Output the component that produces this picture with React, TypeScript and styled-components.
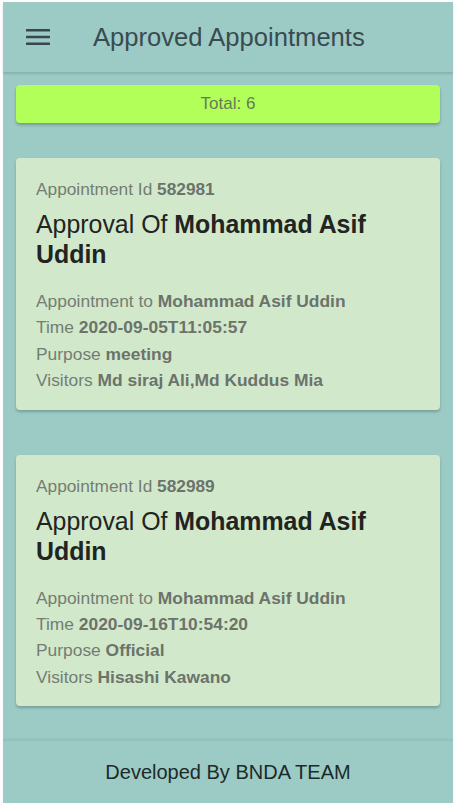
import styled, { createGlobalStyle } from "styled-components";

interface Appointment {
  id: number;
  approvalOf: string;
  to: string;
  time: string;
  purpose: string;
  visitors: string;
}

const appointments: Appointment[] = [
  {
    id: 582981,
    approvalOf: "Mohammad Asif Uddin",
    to: "Mohammad Asif Uddin",
    time: "2020-09-05T11:05:57",
    purpose: "meeting",
    visitors: "Md siraj Ali,Md Kuddus Mia",
  },
  {
    id: 582989,
    approvalOf: "Mohammad Asif Uddin",
    to: "Mohammad Asif Uddin",
    time: "2020-09-16T10:54:20",
    purpose: "Official",
    visitors: "Hisashi Kawano",
  },
];

const GlobalStyle = createGlobalStyle`
  * {
    box-sizing: border-box;
  }
  body {
    margin: 0;
    background: #fdfdfd;
    font-family: "Liberation Sans", Arial, sans-serif;
  }
`;

const Frame = styled.div`
  padding: 2px 1px 3px 3px;
`;

const Screen = styled.div`
  display: flex;
  flex-direction: column;
  min-height: 800px;
  background: #9ccac5;
`;

const Header = styled.header`
  display: flex;
  align-items: center;
  gap: 43px;
  height: 70px;
  padding-left: 23px;
  background: #9ccac5;
  box-shadow: 0 2px 2px rgba(0, 0, 0, 0.12);
  position: relative;
  z-index: 1;
`;

const MenuButton = styled.div`
  display: flex;
  align-items: center;
  width: 24px;
  height: 24px;
`;

const Title = styled.h1`
  margin: 0;
  font-size: 25.6px;
  font-weight: 400;
  color: #3a4b50;
`;

const Content = styled.main`
  flex: 1;
  display: flex;
  flex-direction: column;
  padding: 13px 13px 34px;
`;

const TotalBar = styled.div`
  display: flex;
  align-items: center;
  justify-content: center;
  height: 38px;
  margin-bottom: 35px;
  border-radius: 4px;
  background: #b2ff59;
  color: #667a5a;
  font-size: 17px;
  box-shadow: 0 2px 3px rgba(0, 0, 0, 0.25);
`;

const CardList = styled.div`
  display: flex;
  flex-direction: column;
  gap: 45px;
`;

const Card = styled.article`
  padding: 21px 20px 16px;
  border-radius: 4px;
  background: #d2e8cb;
  box-shadow: 0 2px 3px rgba(0, 0, 0, 0.22);
`;

const IdLine = styled.div`
  font-size: 17.3px;
  line-height: 20px;
  color: #747d74;

  b {
    color: #6b736b;
  }
`;

const CardTitle = styled.h2`
  margin: 10px 0 19px;
  font-size: 24.9px;
  line-height: 30px;
  font-weight: 400;
  color: #212421;
`;

const Details = styled.div`
  display: flex;
  flex-direction: column;
`;

const DetailLine = styled.div`
  font-size: 17.4px;
  line-height: 26.4px;
  color: #747d74;

  b {
    color: #6b736b;
  }
`;

const Footer = styled.footer`
  display: flex;
  align-items: center;
  justify-content: center;
  height: 63px;
  border-top: 1px solid #92c0ba;
  box-shadow: 0 -1px 2px rgba(0, 0, 0, 0.06);
  font-size: 20px;
  color: #1c2a2a;
`;

const MenuIcon = () => (
  <svg width="24" height="18" viewBox="0 0 24 18">
    <rect x="0" y="1" width="24" height="2.6" rx="0.5" fill="#37474f" />
    <rect x="0" y="7.7" width="24" height="2.6" rx="0.5" fill="#37474f" />
    <rect x="0" y="14.4" width="24" height="2.6" rx="0.5" fill="#37474f" />
  </svg>
);

const AppointmentCard = ({ item }: { item: Appointment }) => (
  <Card>
    <IdLine>
      Appointment Id <b>{item.id}</b>
    </IdLine>
    <CardTitle>
      Approval Of <b>{item.approvalOf}</b>
    </CardTitle>
    <Details>
      <DetailLine>
        Appointment to <b>{item.to}</b>
      </DetailLine>
      <DetailLine>
        Time <b>{item.time}</b>
      </DetailLine>
      <DetailLine>
        Purpose <b>{item.purpose}</b>
      </DetailLine>
      <DetailLine>
        Visitors <b>{item.visitors}</b>
      </DetailLine>
    </Details>
  </Card>
);

const App = () => {
  return (
    <>
      <GlobalStyle />
      <Frame>
        <Screen>
          <Header>
            <MenuButton>
              <MenuIcon />
            </MenuButton>
            <Title>Approved Appointments</Title>
          </Header>
          <Content>
            <TotalBar>Total: 6</TotalBar>
            <CardList>
              {appointments.map((item) => (
                <AppointmentCard key={item.id} item={item} />
              ))}
            </CardList>
          </Content>
          <Footer>Developed By BNDA TEAM</Footer>
        </Screen>
      </Frame>
    </>
  );
};

export default App;
